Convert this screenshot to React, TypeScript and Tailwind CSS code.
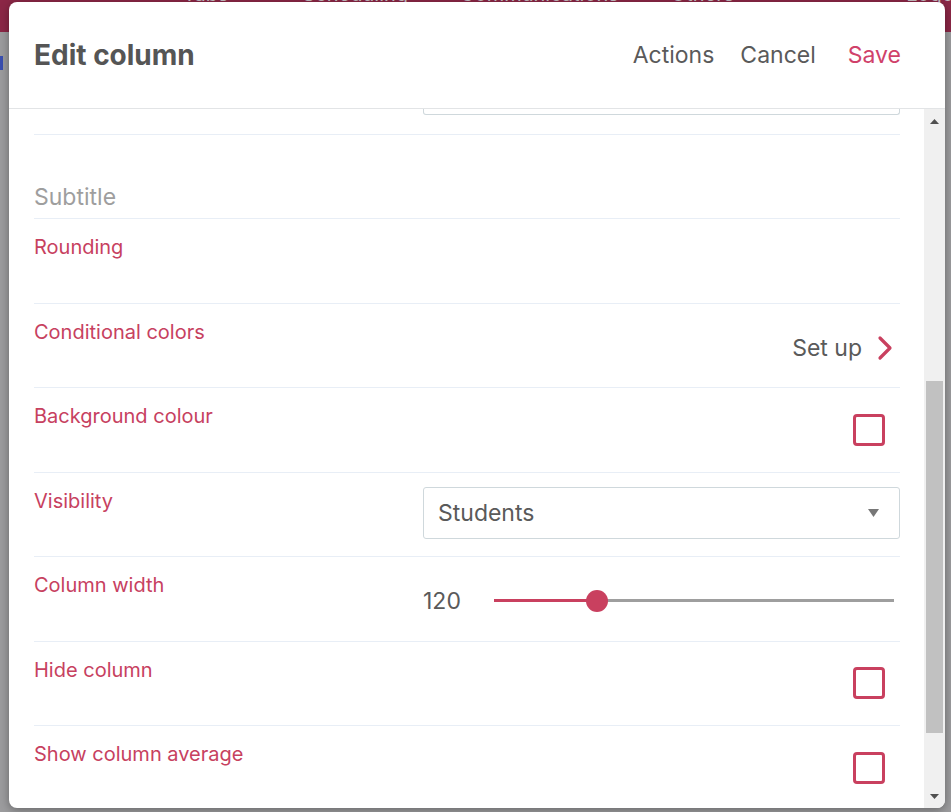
import React from "react";

const Label = ({ children }: { children: React.ReactNode }) => (
  <div className="self-start pt-[14px] text-[20px] leading-[28px] text-[#c7415f]">{children}</div>
);

const Checkbox = () => (
  <div className="flex justify-end pr-[15px]">
    <div className="h-[32px] w-[32px] rounded-[4px] border-[3px] border-[#c9405f] bg-white" />
  </div>
);

const Row = ({ label, children }: { label: string; children?: React.ReactNode }) => (
  <div className="grid h-[84.5px] grid-cols-[389px_1fr] items-center border-b border-[#e8eef6]">
    <Label>{label}</Label>
    <div className="self-center">{children}</div>
  </div>
);

export default function App() {
  return (
    <div className="relative h-[812px] w-[951px] overflow-hidden bg-[#9c9c9e] font-['Inter',sans-serif]">
      {/* background page (dimmed) */}
      <div className="flex h-[32px] items-start overflow-hidden bg-[#8b2746]">
        <div className="-mt-[16px] flex gap-[52px] pl-[183px] text-[20px] leading-[20px] text-[#c9c0c4]">
          <span>Tabs</span>
          <span className="ml-[22px]">Scheduling</span>
          <span>Communications</span>
          <span>Others</span>
          <span className="ml-[120px]">Logo</span>
        </div>
      </div>
      <div className="flex h-[170px] items-start">
        <div className="ml-0 mt-[24px] h-[14px] w-[3px] bg-[#3a4fb0]" />
      </div>

      {/* modal */}
      <div className="absolute left-[9px] top-[2px] flex h-[806px] w-[936px] flex-col overflow-hidden rounded-[8px] bg-white shadow-[0_2px_10px_rgba(0,0,0,0.35)]">
        <div className="flex h-[107px] shrink-0 items-center border-b border-[#e2e4e6] pl-[25px] pr-[44px]">
          <div className="text-[28px] font-bold text-[#555555]">Edit column</div>
          <div className="ml-auto flex items-center text-[23px] text-[#5a5a5a]">
            <span>Actions</span>
            <span className="ml-[26px]">Cancel</span>
            <span className="ml-[32px] text-[#d0416a]">Save</span>
          </div>
        </div>

        <div className="flex min-h-0 flex-1">
          <div className="min-w-0 flex-1 overflow-hidden pl-[25px] pr-[24px]">
            {/* partially scrolled first row */}
            <div className="grid h-[26px] grid-cols-[389px_1fr] border-b border-[#e8eef6]">
              <div />
              <div className="h-[6px] rounded-b-[3px] border-x border-b border-[#cfd8dc]" />
            </div>
            {/* subtitle */}
            <div className="flex h-[84px] items-end border-b border-[#e8eef6] pb-[7px]">
              <input
                placeholder="Subtitle"
                className="h-[28px] w-full bg-transparent text-[23px] text-[#555] outline-none placeholder:text-[#9e9e9e]"
              />
            </div>
            <Row label="Rounding" />
            <Row label="Conditional colors">
              <div className="flex items-center justify-end gap-[15px] pr-[7px] pt-[6px]">
                <span className="text-[23px] text-[#5a5a5a]">Set up</span>
                <svg width="16" height="26" viewBox="0 0 16 26" fill="none">
                  <path d="M3 3 L13 13 L3 23" stroke="#c9405f" strokeWidth="3.2" strokeLinecap="round" strokeLinejoin="round" />
                </svg>
              </div>
            </Row>
            <Row label="Background colour">
              <Checkbox />
            </Row>
            <Row label="Visibility">
              <div className="-mt-[3px] flex h-[52px] items-center rounded-[3px] border border-[#cfd8dc] pl-[14px] pr-[20px]">
                <span className="text-[23px] text-[#5a5a5a]">Students</span>
                <svg className="ml-auto" width="11" height="8" viewBox="0 0 11 8">
                  <path d="M0 0 H11 L5.5 8 Z" fill="#777777" />
                </svg>
              </div>
            </Row>
            <Row label="Column width">
              <div className="flex items-center pt-[4px] pr-[6px]">
                <span className="w-[71px] text-[23px] text-[#5a5a5a]">120</span>
                <div className="relative h-[3px] flex-1 bg-[#9e9e9e]">
                  <div className="h-full w-[103px] bg-[#c9405f]" />
                  <div className="absolute left-[92px] top-[-9.5px] h-[22px] w-[22px] rounded-full bg-[#c9405f]" />
                </div>
              </div>
            </Row>
            <Row label="Hide column">
              <Checkbox />
            </Row>
            <Row label="Show column average">
              <Checkbox />
            </Row>
          </div>

          {/* scrollbar */}
          <div className="flex w-[21px] shrink-0 flex-col items-center bg-[#f0f0f0]">
            <div className="flex h-[20px] w-full items-center justify-center pt-[4px]">
              <svg width="9" height="5" viewBox="0 0 9 5"><path d="M0 5 L4.5 0 L9 5 Z" fill="#505050" /></svg>
            </div>
            <div className="mt-[252px] h-[352px] w-[17px] bg-[#c1c1c1]" />
            <div className="mt-auto flex h-[20px] w-full items-center justify-center pb-[4px]">
              <svg width="9" height="5" viewBox="0 0 9 5"><path d="M0 0 L4.5 5 L9 0 Z" fill="#505050" /></svg>
            </div>
          </div>
        </div>
      </div>
    </div>
  );
}
